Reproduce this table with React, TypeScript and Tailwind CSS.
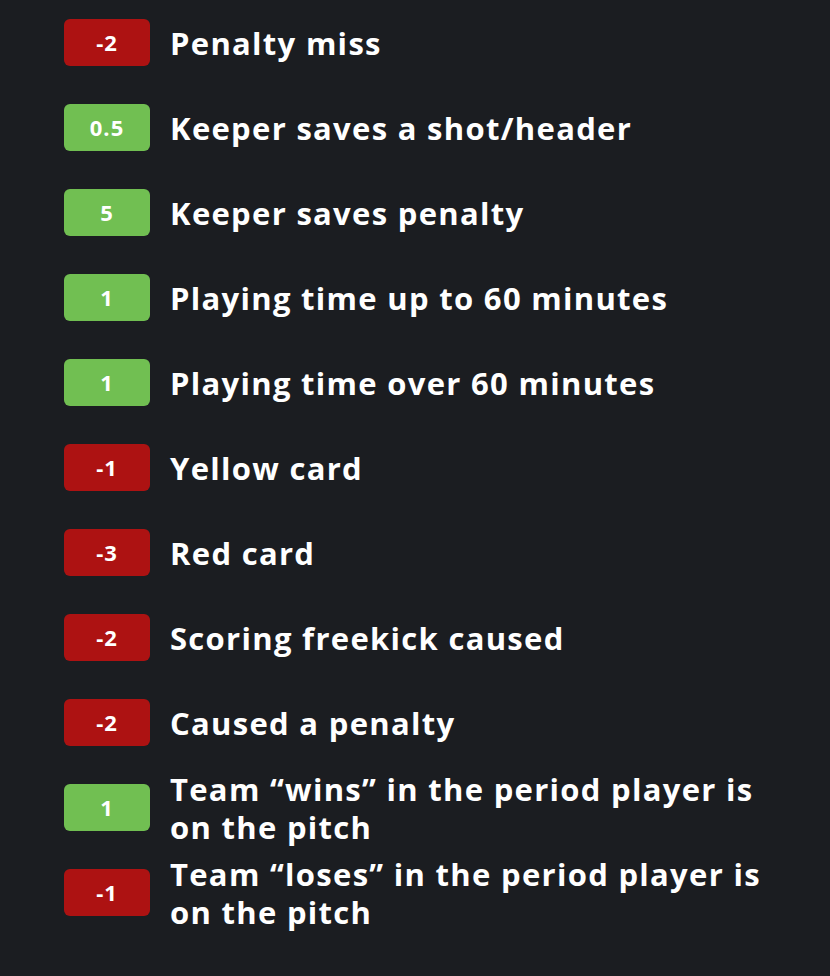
const rules: { pts: string; label: string; good: boolean }[] = [
  { pts: "-2", label: "Penalty miss", good: false },
  { pts: "0.5", label: "Keeper saves a shot/header", good: true },
  { pts: "5", label: "Keeper saves penalty", good: true },
  { pts: "1", label: "Playing time up to 60 minutes", good: true },
  { pts: "1", label: "Playing time over 60 minutes", good: true },
  { pts: "-1", label: "Yellow card", good: false },
  { pts: "-3", label: "Red card", good: false },
  { pts: "-2", label: "Scoring freekick caused", good: false },
  { pts: "-2", label: "Caused a penalty", good: false },
  { pts: "1", label: "Team \u201cwins\u201d in the period player is on the pitch", good: true },
  { pts: "-1", label: "Team \u201closes\u201d in the period player is on the pitch", good: false },
]

export default function App() {
  return (
    <div className="min-h-screen w-full bg-[#1b1d21] font-['Open_Sans',sans-serif] text-white">
      <div className="flex flex-col pl-16 pr-4">
        {rules.map((r, i) => (
          <div key={i} className="flex h-[85px] items-center gap-5">
            <div
              className={`flex h-[47px] w-[86px] shrink-0 items-center justify-center rounded-md text-[22px] font-bold tracking-[1px] ${
                r.good ? "bg-[#71bf52]" : "bg-[#ad1212]"
              }`}
            >
              {r.pts}
            </div>
            <div className="max-w-[610px] text-[31px] font-bold leading-[38px] tracking-[1.3px]">{r.label}</div>
          </div>
        ))}
      </div>
    </div>
  )
}
